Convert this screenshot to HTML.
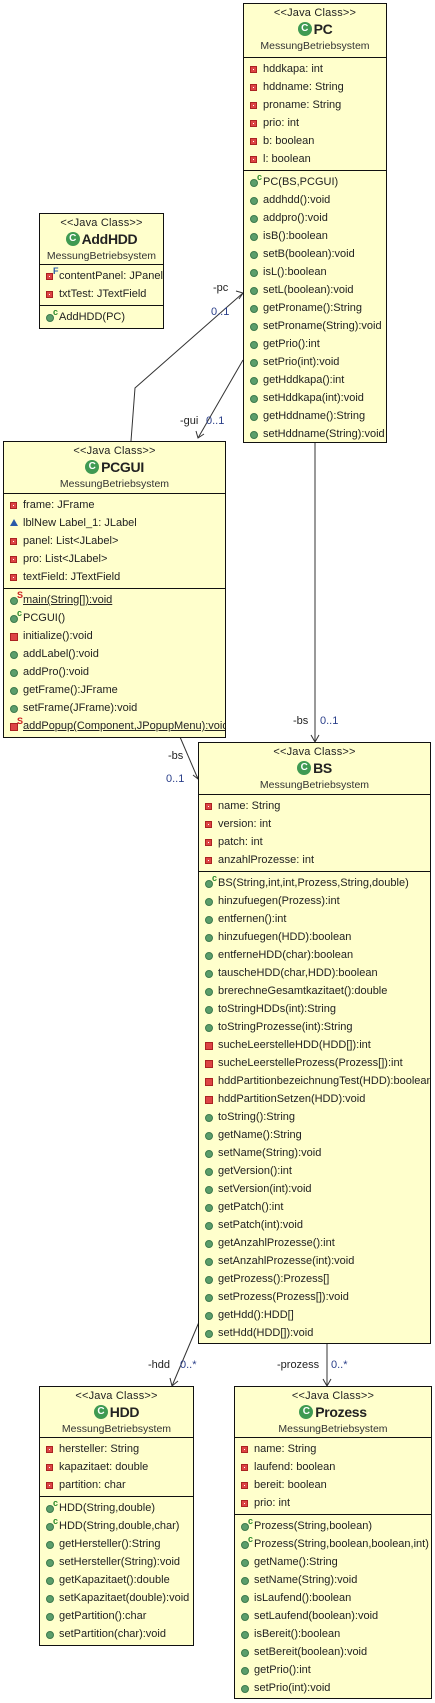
<!DOCTYPE html>
<html><head><meta charset="utf-8"><style>
*{margin:0;padding:0;box-sizing:border-box}
body{width:435px;height:1703px;background:#fff;position:relative;overflow:hidden;font-family:"Liberation Sans",Arial,sans-serif;font-size:11px;color:#222}
.b{position:absolute;background:#ffffcc;border:1px solid #111;overflow:hidden}
.h{text-align:center;border-bottom:1px solid #111;position:relative}
.st{position:absolute;left:0;right:0;top:3px;font-size:11px;letter-spacing:.2px;line-height:13px}
.nm{position:absolute;left:0;right:0;top:17px;font-size:14px;font-weight:bold;letter-spacing:-.3px;display:flex;justify-content:center;align-items:center;height:16px;line-height:16px}
.pk{position:absolute;left:0;right:0;top:36px;font-size:10.5px;color:#333;line-height:12px}
.ci{display:inline-block;width:14px;height:14px;border-radius:50%;background:#3f9a52;color:#fff;font-size:10px;line-height:14px;margin-right:2px;font-weight:bold;text-align:center}
.c{padding:2px 0 2px 0;border-bottom:1px solid #111}
.c:last-child{border-bottom:none}
.r{height:18px;line-height:18px;padding-left:19px;position:relative;white-space:nowrap;letter-spacing:0}
.r i{position:absolute;left:6px;top:6px}
.fp{width:7px;height:7px;background:#d44;border:1px solid #a22}
.fp:after{content:"";position:absolute;left:2px;top:2px;width:1px;height:1px;background:#fff}
.mp{width:8px;height:8px;border-radius:50%;background:#5b9e6b;border:1px solid #3d7a4c}
.mv{width:8px;height:8px;background:#d44;border:1px solid #a22}
.tr{width:0;height:0;border-left:4px solid transparent;border-right:4px solid transparent;border-bottom:7px solid #2a5aa8}
.sup{position:absolute;left:6px;top:-7px;font-size:9px;font-weight:bold;font-style:normal;line-height:9px}
u{text-decoration:underline}
.lb{position:absolute;font-size:11px;color:#222}
.bl{color:#2a3f8a}
</style></head><body>

<svg width="435" height="1703" style="position:absolute;left:0;top:0" fill="none" stroke="#333" stroke-width="1">
<polyline points="131,441 135,388 243,293"/>
<polyline points="236,291 243,293 239,299"/>
<line x1="243" y1="360" x2="198" y2="438"/>
<polyline points="196,431 198,438 204,434"/>
<line x1="315" y1="442" x2="315" y2="742"/>
<polyline points="311,735 315,742 319,735"/>
<line x1="180" y1="737" x2="198" y2="779"/>
<polyline points="193,775 198,779 199,772"/>
<line x1="199" y1="1322" x2="172" y2="1386"/>
<polyline points="170,1378 172,1386 178,1381"/>
<line x1="327" y1="1343" x2="327" y2="1386"/>
<polyline points="323,1379 327,1386 331,1379"/>
</svg>

<div class="lb" style="left:213px;top:282px">-pc</div>
<div class="lb bl" style="left:211px;top:306px">0..1</div>
<div class="lb" style="left:180px;top:415px">-gui</div>
<div class="lb bl" style="left:206px;top:415px">0..1</div>
<div class="lb" style="left:293px;top:715px">-bs</div>
<div class="lb bl" style="left:320px;top:715px">0..1</div>
<div class="lb" style="left:168px;top:750px">-bs</div>
<div class="lb bl" style="left:166px;top:773px">0..1</div>
<div class="lb" style="left:148px;top:1359px">-hdd</div>
<div class="lb bl" style="left:180px;top:1359px">0..*</div>
<div class="lb" style="left:277px;top:1359px">-prozess</div>
<div class="lb bl" style="left:331px;top:1359px">0..*</div>

<!-- PC -->
<div class="b" style="left:243px;top:3px;width:144px;height:440px">
<div class="h" style="height:54px"><div class="st">&lt;&lt;Java Class&gt;&gt;</div><div class="nm"><span class="ci">C</span>PC</div><div class="pk">MessungBetriebsystem</div></div>
<div class="c">
<div class="r"><i class="fp"></i>hddkapa: int</div>
<div class="r"><i class="fp"></i>hddname: String</div>
<div class="r"><i class="fp"></i>proname: String</div>
<div class="r"><i class="fp"></i>prio: int</div>
<div class="r"><i class="fp"></i>b: boolean</div>
<div class="r"><i class="fp"></i>l: boolean</div>
</div>
<div class="c">
<div class="r"><i class="mp"><b class="sup" style="color:#2a8a2a">c</b></i>PC(BS,PCGUI)</div>
<div class="r"><i class="mp"></i>addhdd():void</div>
<div class="r"><i class="mp"></i>addpro():void</div>
<div class="r"><i class="mp"></i>isB():boolean</div>
<div class="r"><i class="mp"></i>setB(boolean):void</div>
<div class="r"><i class="mp"></i>isL():boolean</div>
<div class="r"><i class="mp"></i>setL(boolean):void</div>
<div class="r"><i class="mp"></i>getProname():String</div>
<div class="r"><i class="mp"></i>setProname(String):void</div>
<div class="r"><i class="mp"></i>getPrio():int</div>
<div class="r"><i class="mp"></i>setPrio(int):void</div>
<div class="r"><i class="mp"></i>getHddkapa():int</div>
<div class="r"><i class="mp"></i>setHddkapa(int):void</div>
<div class="r"><i class="mp"></i>getHddname():String</div>
<div class="r"><i class="mp"></i>setHddname(String):void</div>
</div></div>

<!-- AddHDD -->
<div class="b" style="left:39px;top:213px;width:125px;height:116px">
<div class="h" style="height:51px"><div class="st">&lt;&lt;Java Class&gt;&gt;</div><div class="nm"><span class="ci">C</span>AddHDD</div><div class="pk">MessungBetriebsystem</div></div>
<div class="c">
<div class="r"><i class="fp"><b class="sup" style="color:#2a5aa8">F</b></i>contentPanel: JPanel</div>
<div class="r"><i class="fp"></i>txtTest: JTextField</div>
</div>
<div class="c">
<div class="r"><i class="mp"><b class="sup" style="color:#2a8a2a">c</b></i>AddHDD(PC)</div>
</div></div>

<!-- PCGUI -->
<div class="b" style="left:3px;top:441px;width:223px;height:297px">
<div class="h" style="height:52px"><div class="st">&lt;&lt;Java Class&gt;&gt;</div><div class="nm"><span class="ci">C</span>PCGUI</div><div class="pk">MessungBetriebsystem</div></div>
<div class="c">
<div class="r"><i class="fp"></i>frame: JFrame</div>
<div class="r"><i class="tr" style="top:5px"></i>lblNew Label_1: JLabel</div>
<div class="r"><i class="fp"></i>panel: List&lt;JLabel&gt;</div>
<div class="r"><i class="fp"></i>pro: List&lt;JLabel&gt;</div>
<div class="r"><i class="fp"></i>textField: JTextField</div>
</div>
<div class="c">
<div class="r"><i class="mp"><b class="sup" style="color:#c22">S</b></i><u>main(String[]):void</u></div>
<div class="r"><i class="mp"><b class="sup" style="color:#2a8a2a">c</b></i>PCGUI()</div>
<div class="r"><i class="mv"></i>initialize():void</div>
<div class="r"><i class="mp"></i>addLabel():void</div>
<div class="r"><i class="mp"></i>addPro():void</div>
<div class="r"><i class="mp"></i>getFrame():JFrame</div>
<div class="r"><i class="mp"></i>setFrame(JFrame):void</div>
<div class="r"><i class="mv"><b class="sup" style="color:#c22">S</b></i><u>addPopup(Component,JPopupMenu):void</u></div>
</div></div>

<!-- BS -->
<div class="b" style="left:198px;top:742px;width:233px;height:602px">
<div class="h" style="height:52px"><div class="st">&lt;&lt;Java Class&gt;&gt;</div><div class="nm"><span class="ci">C</span>BS</div><div class="pk">MessungBetriebsystem</div></div>
<div class="c">
<div class="r"><i class="fp"></i>name: String</div>
<div class="r"><i class="fp"></i>version: int</div>
<div class="r"><i class="fp"></i>patch: int</div>
<div class="r"><i class="fp"></i>anzahlProzesse: int</div>
</div>
<div class="c">
<div class="r"><i class="mp"><b class="sup" style="color:#2a8a2a">c</b></i>BS(String,int,int,Prozess,String,double)</div>
<div class="r"><i class="mp"></i>hinzufuegen(Prozess):int</div>
<div class="r"><i class="mp"></i>entfernen():int</div>
<div class="r"><i class="mp"></i>hinzufuegen(HDD):boolean</div>
<div class="r"><i class="mp"></i>entferneHDD(char):boolean</div>
<div class="r"><i class="mp"></i>tauscheHDD(char,HDD):boolean</div>
<div class="r"><i class="mp"></i>brerechneGesamtkazitaet():double</div>
<div class="r"><i class="mp"></i>toStringHDDs(int):String</div>
<div class="r"><i class="mp"></i>toStringProzesse(int):String</div>
<div class="r"><i class="mv"></i>sucheLeerstelleHDD(HDD[]):int</div>
<div class="r"><i class="mv"></i>sucheLeerstelleProzess(Prozess[]):int</div>
<div class="r"><i class="mv"></i>hddPartitionbezeichnungTest(HDD):boolean</div>
<div class="r"><i class="mv"></i>hddPartitionSetzen(HDD):void</div>
<div class="r"><i class="mp"></i>toString():String</div>
<div class="r"><i class="mp"></i>getName():String</div>
<div class="r"><i class="mp"></i>setName(String):void</div>
<div class="r"><i class="mp"></i>getVersion():int</div>
<div class="r"><i class="mp"></i>setVersion(int):void</div>
<div class="r"><i class="mp"></i>getPatch():int</div>
<div class="r"><i class="mp"></i>setPatch(int):void</div>
<div class="r"><i class="mp"></i>getAnzahlProzesse():int</div>
<div class="r"><i class="mp"></i>setAnzahlProzesse(int):void</div>
<div class="r"><i class="mp"></i>getProzess():Prozess[]</div>
<div class="r"><i class="mp"></i>setProzess(Prozess[]):void</div>
<div class="r"><i class="mp"></i>getHdd():HDD[]</div>
<div class="r"><i class="mp"></i>setHdd(HDD[]):void</div>
</div></div>

<!-- HDD -->
<div class="b" style="left:39px;top:1386px;width:155px;height:260px">
<div class="h" style="height:51px"><div class="st">&lt;&lt;Java Class&gt;&gt;</div><div class="nm"><span class="ci">C</span>HDD</div><div class="pk">MessungBetriebsystem</div></div>
<div class="c">
<div class="r"><i class="fp"></i>hersteller: String</div>
<div class="r"><i class="fp"></i>kapazitaet: double</div>
<div class="r"><i class="fp"></i>partition: char</div>
</div>
<div class="c">
<div class="r"><i class="mp"><b class="sup" style="color:#2a8a2a">c</b></i>HDD(String,double)</div>
<div class="r"><i class="mp"><b class="sup" style="color:#2a8a2a">c</b></i>HDD(String,double,char)</div>
<div class="r"><i class="mp"></i>getHersteller():String</div>
<div class="r"><i class="mp"></i>setHersteller(String):void</div>
<div class="r"><i class="mp"></i>getKapazitaet():double</div>
<div class="r"><i class="mp"></i>setKapazitaet(double):void</div>
<div class="r"><i class="mp"></i>getPartition():char</div>
<div class="r"><i class="mp"></i>setPartition(char):void</div>
</div></div>

<!-- Prozess -->
<div class="b" style="left:234px;top:1386px;width:198px;height:313px">
<div class="h" style="height:51px"><div class="st">&lt;&lt;Java Class&gt;&gt;</div><div class="nm"><span class="ci">C</span>Prozess</div><div class="pk">MessungBetriebsystem</div></div>
<div class="c">
<div class="r"><i class="fp"></i>name: String</div>
<div class="r"><i class="fp"></i>laufend: boolean</div>
<div class="r"><i class="fp"></i>bereit: boolean</div>
<div class="r"><i class="fp"></i>prio: int</div>
</div>
<div class="c">
<div class="r"><i class="mp"><b class="sup" style="color:#2a8a2a">c</b></i>Prozess(String,boolean)</div>
<div class="r"><i class="mp"><b class="sup" style="color:#2a8a2a">c</b></i>Prozess(String,boolean,boolean,int)</div>
<div class="r"><i class="mp"></i>getName():String</div>
<div class="r"><i class="mp"></i>setName(String):void</div>
<div class="r"><i class="mp"></i>isLaufend():boolean</div>
<div class="r"><i class="mp"></i>setLaufend(boolean):void</div>
<div class="r"><i class="mp"></i>isBereit():boolean</div>
<div class="r"><i class="mp"></i>setBereit(boolean):void</div>
<div class="r"><i class="mp"></i>getPrio():int</div>
<div class="r"><i class="mp"></i>setPrio(int):void</div>
</div></div>

</body></html>
